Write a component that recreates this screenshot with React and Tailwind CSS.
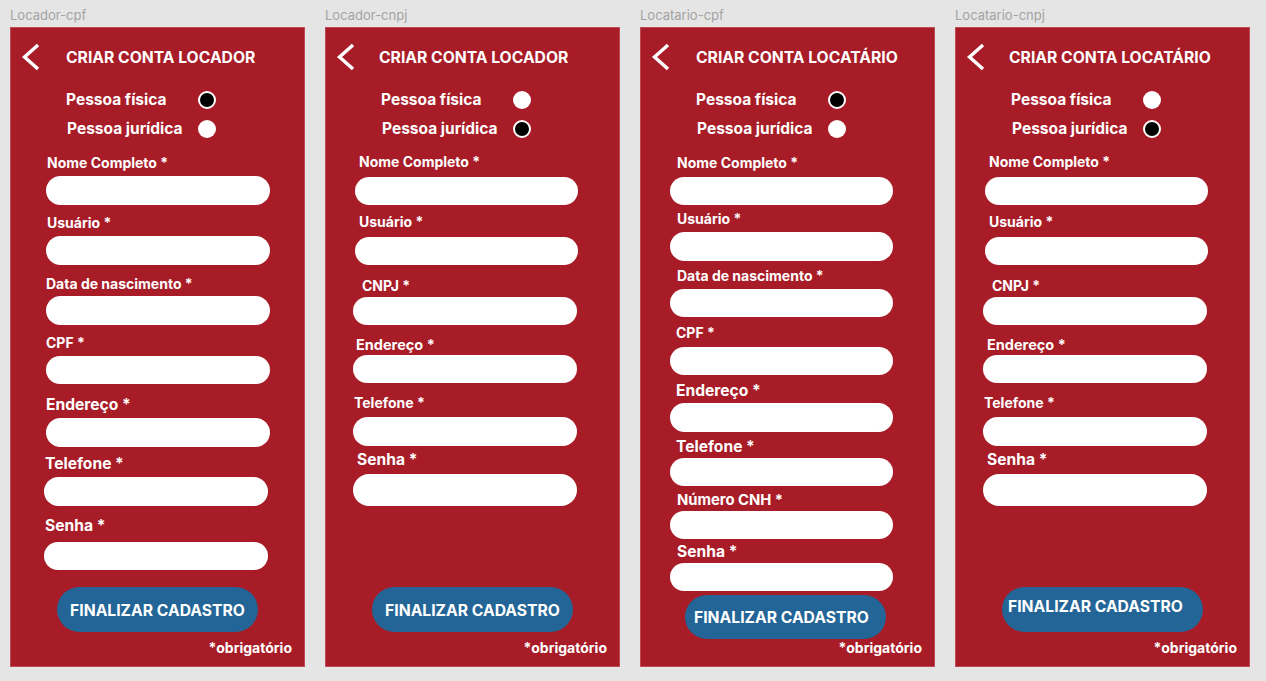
import React from 'react';

const W = 'w-[224px]';
const W3 = 'w-[223px]';

const frames = [
    {
        name: 'Locador-cpf',
        title: 'CRIAR CONTA LOCADOR',
        titleCls: 'ml-[25px]',
        fisica: true,
        fields: [
            ['Nome Completo *', 'mt-[14px] ml-[37px] text-[14px]', `mt-[3px] ml-[36px] h-[29px] ${W}`],
            ['Usuário *', 'mt-[8px] ml-[37px] text-[14px]', `mt-[3px] ml-[36px] h-[29px] ${W}`],
            ['Data de nascimento *', 'mt-[9px] ml-[36px] text-[14px]', `mt-[2px] ml-[36px] h-[29px] ${W}`],
            ['CPF *', 'mt-[8px] ml-[36px] text-[14px]', `mt-[3px] ml-[36px] h-[28px] ${W}`],
            ['Endereço *', 'mt-[11px] ml-[36px] text-[15.6px]', `mt-[3px] ml-[36px] h-[29px] ${W}`],
            ['Telefone *', 'mt-[7px] ml-[35px] text-[15.6px]', `mt-[3px] ml-[34px] h-[29px] ${W}`],
            ['Senha *', 'mt-[10px] ml-[35px] text-[15.6px]', `mt-[6px] ml-[34px] h-[28px] ${W}`],
        ],
        button: 'mt-[17px] ml-[47px] h-[45px] justify-center items-center pt-[2px]',
        obrig: 'mt-[7px]',
    },
    {
        name: 'Locador-cnpj',
        title: 'CRIAR CONTA LOCADOR',
        titleCls: 'ml-[23px]',
        fisica: false,
        fields: [
            ['Nome Completo *', 'mt-[13px] ml-[34px] text-[14px]', `mt-[5px] ml-[30px] h-[28px] ${W3}`],
            ['Usuário *', 'mt-[7px] ml-[34px] text-[14px]', `mt-[5px] ml-[30px] h-[28px] ${W3}`],
            ['CNPJ *', 'mt-[11px] ml-[37px] text-[14px]', `mt-[1px] ml-[28px] h-[28px] ${W}`],
            ['Endereço *', 'mt-[10px] ml-[31px] text-[14.5px]', `mt-0 ml-[28px] h-[28px] ${W}`],
            ['Telefone *', 'mt-[10px] ml-[29px] text-[14px]', `mt-[4px] ml-[28px] h-[29px] ${W}`],
            ['Senha *', 'mt-[4px] ml-[32px] text-[15.6px]', `mt-[4px] ml-[28px] h-[32px] ${W}`],
        ],
        button: 'mt-[81px] ml-[47px] h-[45px] justify-center items-center pt-[2px]',
        obrig: 'mt-[7px]',
    },
    {
        name: 'Locatario-cpf',
        title: 'CRIAR CONTA LOCATÁRIO',
        titleCls: 'ml-[25px]',
        fisica: true,
        fields: [
            ['Nome Completo *', 'mt-[14px] ml-[37px] text-[14px]', `mt-[4px] ml-[30px] h-[28px] ${W3}`],
            ['Usuário *', 'mt-[4px] ml-[37px] text-[14px]', `mt-[3px] ml-[30px] h-[29px] ${W3}`],
            ['Data de nascimento *', 'mt-[5px] ml-[37px] text-[14px]', `mt-[3px] ml-[30px] h-[28px] ${W3}`],
            ['CPF *', 'mt-[6px] ml-[36px] text-[14px]', `mt-[4px] ml-[30px] h-[28px] ${W3}`],
            ['Endereço *', 'mt-[6px] ml-[36px] text-[15.6px]', `mt-[2px] ml-[30px] h-[29px] ${W3}`],
            ['Telefone *', 'mt-[5px] ml-[36px] text-[15.6px]', `mt-[1px] ml-[30px] h-[28px] ${W3}`],
            ['Número CNH *', 'mt-[4px] ml-[37px] text-[14.8px]', `mt-[1px] ml-[30px] h-[28px] ${W3}`],
            ['Senha *', 'mt-[3px] ml-[37px] text-[15.6px]', `mt-[1px] ml-[30px] h-[28px] ${W3}`],
        ],
        button: 'mt-[4px] ml-[45px] h-[44px] justify-start items-center pl-[9px] pt-[2px]',
        obrig: 'mt-0',
    },
    {
        name: 'Locatario-cnpj',
        title: 'CRIAR CONTA LOCATÁRIO',
        titleCls: 'ml-[23px]',
        fisica: false,
        fields: [
            ['Nome Completo *', 'mt-[13px] ml-[34px] text-[14px]', `mt-[5px] ml-[30px] h-[28px] ${W3}`],
            ['Usuário *', 'mt-[7px] ml-[34px] text-[14px]', `mt-[5px] ml-[30px] h-[28px] ${W3}`],
            ['CNPJ *', 'mt-[11px] ml-[37px] text-[14px]', `mt-[1px] ml-[28px] h-[28px] ${W}`],
            ['Endereço *', 'mt-[10px] ml-[32px] text-[14.5px]', `mt-0 ml-[28px] h-[28px] ${W}`],
            ['Telefone *', 'mt-[10px] ml-[29px] text-[14px]', `mt-[4px] ml-[28px] h-[29px] ${W}`],
            ['Senha *', 'mt-[4px] ml-[32px] text-[15.6px]', `mt-[4px] ml-[28px] h-[32px] ${W}`],
        ],
        button: 'mt-[81px] ml-[47px] h-[45px] justify-start items-start pl-[6px] pt-[11px]',
        obrig: 'mt-[7px]',
    },
];

const BackIcon = () => (
    <svg width="20" height="28" viewBox="0 0 20 28" className="ml-[11px]">
        <path d="M17 2 L3.5 14 L17 26" fill="none" stroke="white" strokeWidth="3.4" strokeLinejoin="miter" />
    </svg>
);

const Radio = ({ on }) => (
    on
        ? <span className="block w-[18px] h-[18px] rounded-full bg-black border-2 border-white" />
        : <span className="block w-[18px] h-[18px] rounded-full bg-white" />
);

const Frame = ({ frame }) => (
    <div className="w-[295px]">
        <div className="pt-[7px] text-[13px] leading-[17px] text-[#a3a3a3]">{frame.name}</div>
        <div className="mt-[3px] h-[640px] bg-[#a81c27] ring-1 ring-inset ring-[#bf4a55] flex flex-col text-white font-bold">
            <div className="mt-[16px] h-[28px] flex items-center">
                <BackIcon />
                <span className={`text-[15.7px] leading-[18px] pt-[2px] ${frame.titleCls}`}>{frame.title}</span>
            </div>

            <div className="mt-[19px] h-[20px] flex items-center text-[15.5px]">
                <span className="ml-[56px] w-[132px]">Pessoa física</span>
                <Radio on={frame.fisica} />
            </div>
            <div className="mt-[9px] h-[20px] flex items-center text-[15.5px]">
                <span className="ml-[57px] w-[131px]">Pessoa jurídica</span>
                <Radio on={!frame.fisica} />
            </div>

            {frame.fields.map(([label, lcls, icls]) => (
                <React.Fragment key={label}>
                    <div className={`leading-[20px] ${lcls}`}>{label}</div>
                    <div className={`bg-white rounded-full shrink-0 ${icls}`} />
                </React.Fragment>
            ))}

            <div className={`w-[201px] shrink-0 flex rounded-full bg-[#236596] text-[15.7px] leading-[18px] ${frame.button}`}>
                FINALIZAR CADASTRO
            </div>
            <div className={`self-end mr-[13px] text-[14px] leading-[18px] ${frame.obrig}`}>*obrigatório</div>
        </div>
    </div>
);

export default function App() {
    return (
        <div className="w-[1266px] h-[681px] overflow-hidden bg-[#e5e5e5] font-['Inter','Liberation_Sans',sans-serif]">
            <div className="flex gap-5 pl-[10px]">
                {frames.map(f => (
                    <Frame key={f.name} frame={f} />
                ))}
            </div>
        </div>
    );
}
